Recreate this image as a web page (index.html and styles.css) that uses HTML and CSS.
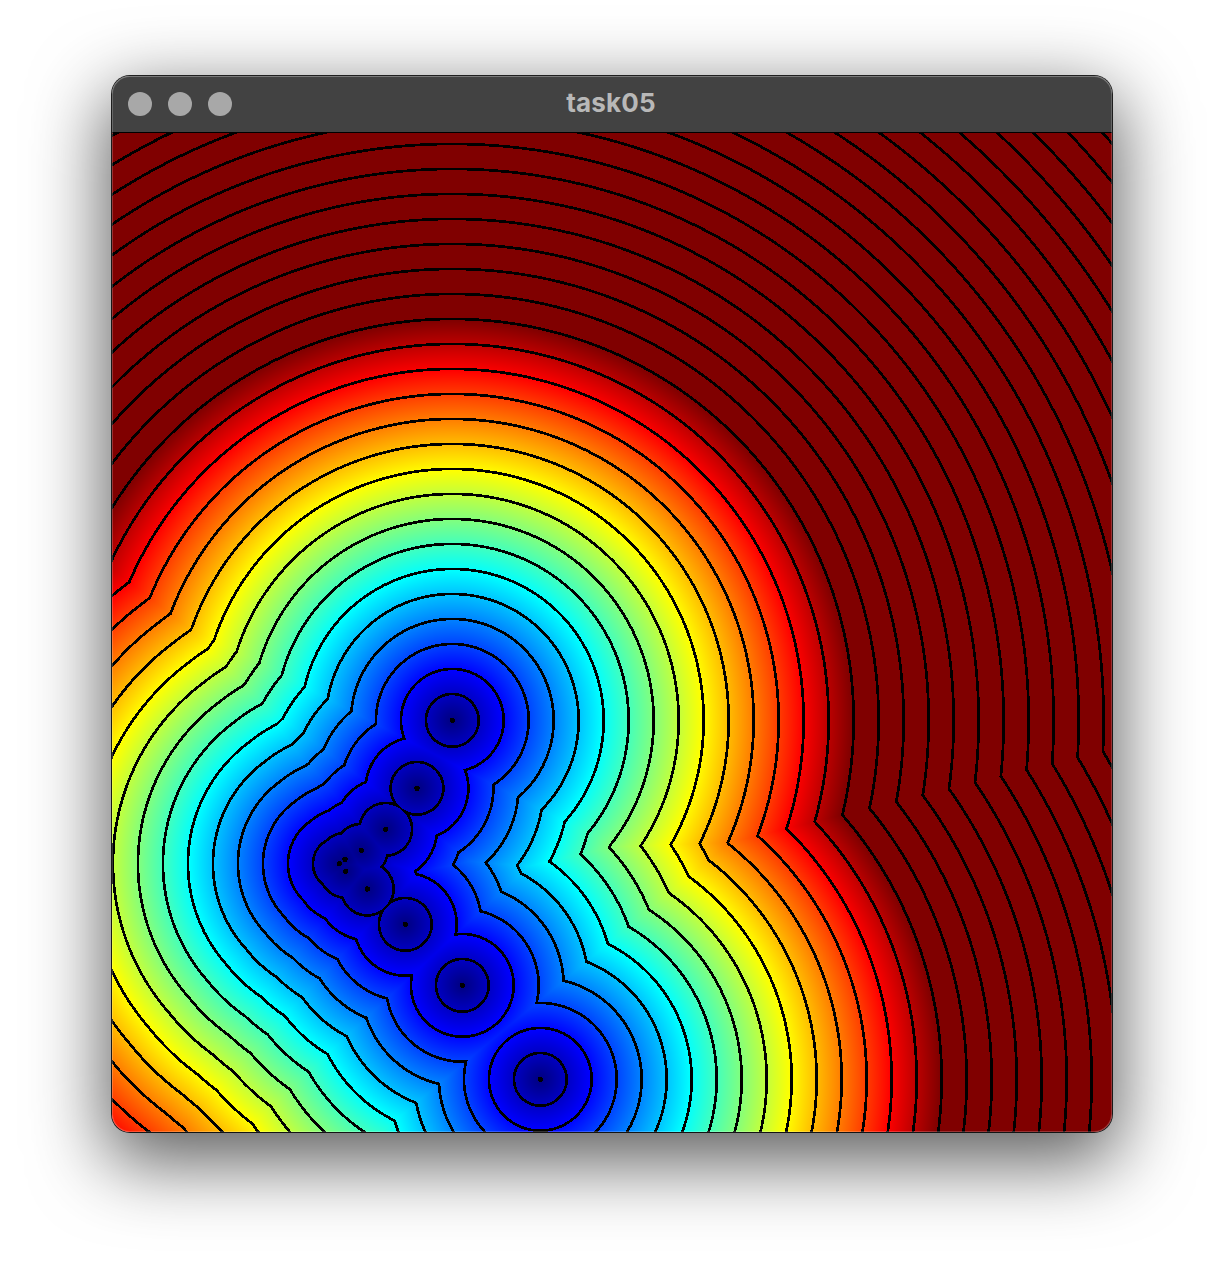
FILE: index.html
```html
<!DOCTYPE html>
<html lang="en">
<head>
<meta charset="utf-8">
<title>task05</title>
<link rel="stylesheet" href="styles.css">
</head>
<body>
<main class="window">
  <header class="titlebar">
    <div class="lights">
      <span class="light"></span>
      <span class="light"></span>
      <span class="light"></span>
    </div>
    <h1 class="title">task05</h1>
  </header>
  <canvas class="field" id="field" width="1000" height="999"></canvas>
</main>
<script src="field.js"></script>
</body>
</html>
```

FILE: styles.css
```css
html, body {
  margin: 0;
  background: #fff;
}
body {
  padding: 76px 112px 148px;
  overflow: hidden;
}
.window {
  position: relative;
  width: 1000px;
  height: 1056px;
  border-radius: 18px;
  overflow: hidden;
  box-shadow: 0 0 0 1px rgba(0, 0, 0, 0.85), 0 24px 74px 6px rgba(0, 0, 0, 0.64);
}
.window::after {
  content: "";
  position: absolute;
  inset: 0;
  border-radius: 18px;
  box-shadow: inset 0 0 0 1px rgba(255, 255, 255, 0.2), inset 0 1px 0 rgba(255, 255, 255, 0.12);
  pointer-events: none;
}
.titlebar {
  position: relative;
  display: flex;
  align-items: center;
  justify-content: center;
  height: 56px;
  background: #424242;
  border-bottom: 1px solid #000;
}
.lights {
  position: absolute;
  left: 16px;
  top: 16px;
  display: flex;
  gap: 16px;
}
.light {
  width: 24px;
  height: 24px;
  border-radius: 50%;
  background: #a8a8a8;
}
.title {
  margin: 0 0 2px -2px;
  font-family: Inter, "Liberation Sans", sans-serif;
  font-size: 26px;
  font-weight: 700;
  line-height: 54px;
  letter-spacing: 0.2px;
  color: #b8b8b8;
}
.field {
  display: block;
  width: 1000px;
  height: 999px;
}
```

FILE: field.js
```js
var canvas = document.getElementById("field");
var ctx = canvas.getContext("2d");
var W = canvas.width, H = canvas.height;
var OX = 112, OY = 133;
var seeds = [
  [452.3, 720.3], [417, 788.3], [385.7, 829.3], [361.3, 850.3],
  [345, 859.3], [339.3, 863.7], [345.7, 871.3], [367.3, 889],
  [405.3, 924.3], [462.3, 985.3], [540.3, 1079.3]
];
function clamp(v) { return v < 0 ? 0 : v > 1 ? 1 : v; }
var img = ctx.createImageData(W, H);
var data = img.data;
for (var y = 0; y < H; y++) {
  for (var x = 0; x < W; x++) {
    var px = x + OX + 0.5, py = y + OY + 0.5, best = 1e12;
    for (var i = 0; i < seeds.length; i++) {
      var dx = px - seeds[i][0], dy = py - seeds[i][1];
      var q = dx * dx + dy * dy;
      if (q < best) best = q;
    }
    var d = Math.sqrt(best);
    var k = (x + y * W) * 4;
    var r = 0, g = 0, b = 0;
    if (d % 25 >= 2.7) {
      var t = clamp(d / 400);
      r = clamp(Math.min(4 * t - 1.5, 4.5 - 4 * t));
      g = clamp(Math.min(4 * t - 0.5, 3.5 - 4 * t));
      b = clamp(Math.min(4 * t + 0.5, 2.5 - 4 * t));
    }
    data[k] = r * 255;
    data[k + 1] = g * 255;
    data[k + 2] = b * 255;
    data[k + 3] = 255;
  }
}
ctx.putImageData(img, 0, 0);
```
